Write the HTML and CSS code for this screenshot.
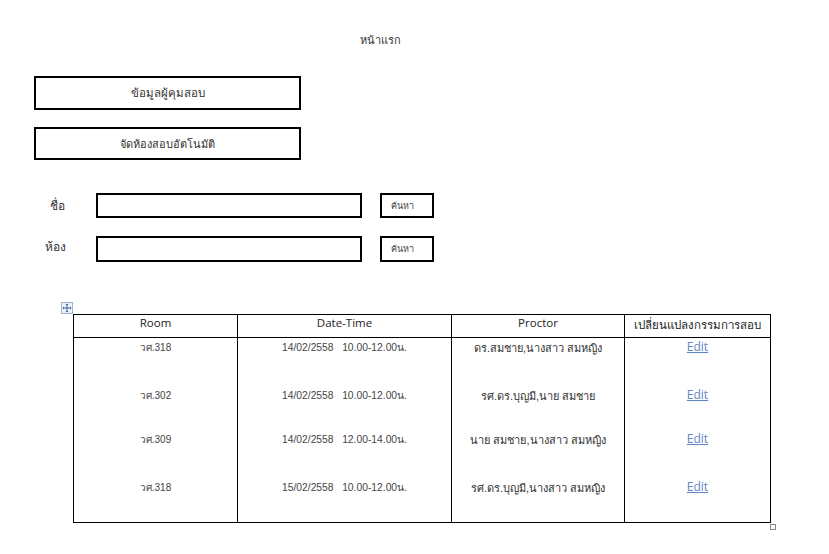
FILE: index.html
```html
<!DOCTYPE html>
<html lang="th">
<head>
<meta charset="utf-8">
<title>หน้าแรก</title>
<link rel="stylesheet" href="styles.css">
</head>
<body>
<div class="page">
  <div class="title">หน้าแรก</div>
  <div class="menu-box first">ข้อมูลผู้คุมสอบ</div>
  <div class="menu-box second">จัดห้องสอบอัตโนมัติ</div>

  <div class="form-row row-name">
    <span class="label label-name">ชื่อ</span>
    <div class="field"></div>
    <div class="search-btn">ค้นหา</div>
  </div>
  <div class="form-row row-room">
    <span class="label label-room">ห้อง</span>
    <div class="field"></div>
    <div class="search-btn">ค้นหา</div>
  </div>

  <div class="table-wrap">
    <span class="move-handle">
      <svg width="12" height="12" viewBox="0 0 12 12">
        <rect x="0.5" y="0.5" width="11" height="11" fill="#eef2f9" stroke="#9fb3d3"/>
        <path d="M6 2v8M2 6h8" stroke="#41649c" stroke-width="1"/>
        <path d="M6 1.5L4.5 3h3zM6 10.5L4.5 9h3zM1.5 6L3 4.5v3zM10.5 6L9 4.5v3z" fill="#41649c"/>
      </svg>
    </span>
    <table class="grid">
      <colgroup>
        <col class="c1"><col class="c2"><col class="c3"><col class="c4">
      </colgroup>
      <thead>
        <tr>
          <th>Room</th>
          <th>Date-Time</th>
          <th>Proctor</th>
          <th class="th-thai">เปลี่ยนแปลงกรรมการสอบ</th>
        </tr>
      </thead>
      <tbody>
        <tr>
          <td class="room">วศ.318</td>
          <td class="dt">14/02/2558&nbsp;&nbsp; 10.00-12.00น.</td>
          <td class="proc">ดร.สมชาย,นางสาว สมหญิง</td>
          <td class="edit"><a href="#">Edit</a></td>
        </tr>
        <tr>
          <td class="room">วศ.302</td>
          <td class="dt">14/02/2558&nbsp;&nbsp; 10.00-12.00น.</td>
          <td class="proc">รศ.ดร.บุญมี,นาย สมชาย</td>
          <td class="edit"><a href="#">Edit</a></td>
        </tr>
        <tr>
          <td class="room">วศ.309</td>
          <td class="dt">14/02/2558&nbsp;&nbsp; 12.00-14.00น.</td>
          <td class="proc">นาย สมชาย,นางสาว สมหญิง</td>
          <td class="edit"><a href="#">Edit</a></td>
        </tr>
        <tr>
          <td class="room">วศ.318</td>
          <td class="dt">15/02/2558&nbsp;&nbsp; 10.00-12.00น.</td>
          <td class="proc">รศ.ดร.บุญมี,นางสาว สมหญิง</td>
          <td class="edit"><a href="#">Edit</a></td>
        </tr>
      </tbody>
    </table>
    <span class="resize-handle"></span>
  </div>
</div>
</body>
</html>
```

FILE: styles.css
```css
* { box-sizing: border-box; }
html, body { margin: 0; padding: 0; background: #fff; }
body {
  font-family: "Liberation Sans", "DejaVu Sans", sans-serif;
  color: #333;
  width: 829px;
  height: 554px;
  overflow: hidden;
}
.page { padding-top: 32px; }
.title {
  width: 760px;
  text-align: center;
  font-size: 11px;
  line-height: 16px;
  color: #333;
}
.menu-box {
  margin-left: 34px;
  width: 267px;
  height: 34px;
  border: 2px solid #000;
  display: flex;
  align-items: center;
  justify-content: center;
  font-size: 11.5px;
  color: #333;
}
.menu-box.first { margin-top: 28px; }
.menu-box.second { margin-top: 17px; height: 33px; font-size: 11px; }

.form-row {
  display: flex;
  align-items: center;
  height: 25px;
}
.row-name { margin-top: 33px; }
.row-room { margin-top: 18px; height: 26px; }
.label {
  font-size: 12px;
  color: #333;
  width: 96px;
}
.label-name { padding-left: 50px; }
.label-room { padding-left: 45px; position: relative; top: -3px; }
.field {
  width: 266px;
  height: 100%;
  border: 2px solid #000;
}
.search-btn {
  margin-left: 18px;
  width: 54px;
  height: 100%;
  border: 2px solid #000;
  font-size: 9px;
  color: #444;
  display: flex;
  align-items: center;
  padding-left: 9px;
}

.table-wrap {
  position: relative;
  margin-top: 52px;
  margin-left: 73px;
  width: 697px;
}
.move-handle {
  position: absolute;
  left: -12px;
  top: -12px;
  width: 12px;
  height: 12px;
  line-height: 0;
}
.resize-handle {
  position: absolute;
  right: -6px;
  bottom: -7px;
  width: 6px;
  height: 6px;
  border: 1px solid #888;
  background: #fff;
}
.grid {
  border-collapse: collapse;
  table-layout: fixed;
  width: 697px;
}
.c1 { width: 164px; }
.c2 { width: 214px; }
.c3 { width: 173px; }
.c4 { width: 146px; }
.grid th, .grid td {
  border: 1px solid #000;
  padding: 0;
  text-align: center;
  vertical-align: top;
}
.grid tbody td { border-top: none; border-bottom: none; }
.grid tbody tr:first-child td { border-top: 1px solid #000; }
.grid tbody tr:last-child td { border-bottom: 1px solid #000; }
.grid th {
  height: 23px;
  font-family: "Open Sans", "Liberation Sans", sans-serif;
  font-weight: normal;
  font-size: 11.5px;
  line-height: 16px;
  color: #222;
}
.grid th.th-thai { font-family: "Liberation Sans", "DejaVu Sans", sans-serif; font-size: 11.5px; line-height: 20px; }
.grid tbody tr { height: 46px; }
.grid tbody tr td { padding-top: 3px; }
.grid tbody tr:nth-child(2) td,
.grid tbody tr:nth-child(4) td { padding-top: 5px; }
.grid tbody tr:last-child { height: 47px; }
.room { font-size: 10px; color: #444; line-height: 14px; }
.dt { font-size: 10.3px; color: #444; line-height: 14px; }
.proc { font-size: 11px; color: #333; line-height: 14px; }
.edit { font-size: 12px; line-height: 12px; }
.edit a {
  font-family: "Open Sans", "Liberation Sans", sans-serif;
  color: #5f86c2;
  text-decoration: underline;
}
```
